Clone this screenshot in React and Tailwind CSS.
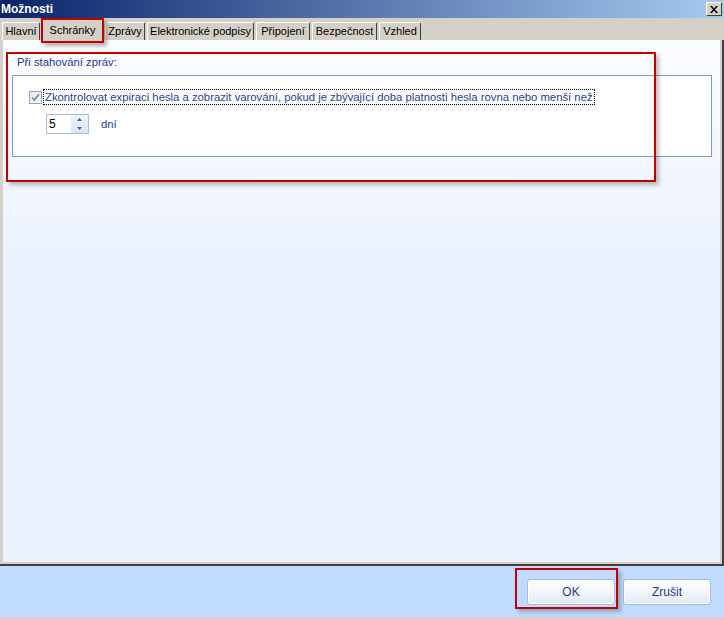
import React from 'react';

const tabs = [
    { label: 'Hlavní', w: 'w-[38px]' },
    { label: 'Schránky', w: 'w-[61px]', active: true },
    { label: 'Zprávy', w: 'w-[40px]' },
    { label: 'Elektronické podpisy', w: 'w-[107px]' },
    { label: 'Připojení', w: 'w-[54px]' },
    { label: 'Bezpečnost', w: 'w-[65px]' },
    { label: 'Vzhled', w: 'w-[42px]' },
];

const Tab = ({ label, w, active }) => (
    <div
        className={`${w} flex items-center justify-center border-t border-l border-white border-r border-r-[#404040] rounded-t-[2px] bg-[#d4d0c8] text-black whitespace-nowrap ${
            active ? 'h-[22px] -mb-[1px] relative z-10' : 'h-[18px]'
        }`}
    >
        {label}
    </div>
);

const DialogButton = ({ children }) => (
    <button className="w-[88px] h-[26px] rounded-[3px] border border-[#a9bcd6] bg-[linear-gradient(to_bottom,#ffffff_0%,#f3f6fb_50%,#dfe8f5_100%)] shadow-[inset_0_0_0_1px_#ffffff] text-[#1e3b8f] text-[12px]">
        {children}
    </button>
);

const App = () => {
    return (
        <div className="relative w-[724px] h-[619px] overflow-hidden flex flex-col bg-[#d4d0c8] font-['Liberation_Sans','DejaVu_Sans',sans-serif] text-[11px]">
            {/* title bar */}
            <div className="h-[18px] flex items-center justify-between bg-[linear-gradient(to_right,#0a246a,#a6caf0)] pl-[1px] pr-[2px]">
                <span className="text-white font-bold text-[12px] leading-none">Možnosti</span>
                <div className="w-[16px] h-[14px] bg-[#d4d0c8] border border-t-white border-l-white border-r-[#404040] border-b-[#404040] flex items-center justify-center">
                    <svg width="8" height="7" viewBox="0 0 8 7">
                        <path d="M0 0h2l2 2.5L6 0h2L5 3.5 8 7H6L4 4.5 2 7H0l3-3.5z" fill="#000" />
                    </svg>
                </div>
            </div>

            {/* tab strip */}
            <div className="h-[22px] flex items-end gap-[2px] pl-[2px]">
                {tabs.map((t) => (
                    <Tab key={t.label} {...t} />
                ))}
            </div>

            {/* page */}
            <div className="h-[526px] flex pl-[3px] pr-[2px] pb-[2px] border-r-2 border-b-2 border-[#404040]">
                <div className="flex-1 border-t border-white bg-[linear-gradient(to_bottom,#fbfcff_0%,#eaf1fd_46%,#eaf1fd_100%)]">
                    <div className="mt-[15px] ml-[14px] leading-[13px] text-[11.3px] text-[#1f3c96]">Při stahování zpráv:</div>
                    <div className="mt-[6px] ml-[9px] mr-[8px] h-[82px] bg-white border border-[#7b9ed6] pt-[13px] text-[11.3px]">
                        <div className="flex items-center h-[16px] pl-[16px]">
                            <div className="w-[13px] h-[13px] border border-[#8fa4c2] bg-[linear-gradient(to_bottom_right,#e4e8f0,#f8f9fb)] flex items-center justify-center">
                                <svg width="9" height="9" viewBox="0 0 9 9">
                                    <path d="M1 4.5l2.3 2.5L8 1.2" stroke="#7b8daf" strokeWidth="1.8" fill="none" />
                                </svg>
                            </div>
                            <span className="ml-[1px] h-[16px] flex items-center px-[1px] border border-dotted border-black text-[#1e3f95] whitespace-nowrap">
                                Zkontrolovat expiraci hesla a zobrazit varování, pokud je zbývající doba platnosti hesla rovna nebo menší než
                            </span>
                        </div>
                        <div className="flex items-center mt-[9px] pl-[33px]">
                            <div className="w-[43px] h-[20px] border border-[#a7bcd6] bg-white flex">
                                <span className="flex-1 pl-[2px] text-black text-[12px] leading-[18px]">5</span>
                                <div className="w-[17px] flex flex-col bg-[linear-gradient(to_bottom,#eef3fa,#dae4f2)]">
                                    <div className="flex-1 flex items-center justify-center">
                                        <svg width="5" height="3" viewBox="0 0 5 3"><path d="M0 3L2.5 0 5 3z" fill="#4d6185" /></svg>
                                    </div>
                                    <div className="flex-1 flex items-center justify-center">
                                        <svg width="5" height="3" viewBox="0 0 5 3"><path d="M0 0h5L2.5 3z" fill="#4d6185" /></svg>
                                    </div>
                                </div>
                            </div>
                            <span className="ml-[12px] text-[#1e3f95]">dní</span>
                        </div>
                    </div>
                </div>
            </div>

            {/* bottom band */}
            <div className="flex-1 bg-[#c0dbff] border-b-2 border-[#d4d0c8] flex justify-end items-start gap-[8px] pt-[13px] pr-[13px]">
                <DialogButton>OK</DialogButton>
                <DialogButton>Zrušit</DialogButton>
            </div>

            {/* red highlight annotations */}
            <div className="absolute left-[41px] top-[18px] w-[63px] h-[25px] border-2 border-[#c40000] shadow-[3px_3px_4px_rgba(0,0,0,0.3)] z-20" />
            <div className="absolute left-[6px] top-[52px] w-[650px] h-[130px] border-2 border-[#c40000] shadow-[3px_3px_4px_rgba(0,0,0,0.25)] z-20" />
            <div className="absolute left-[515px] top-[568px] w-[103px] h-[41px] border-2 border-[#c40000] shadow-[3px_3px_4px_rgba(0,0,0,0.25)] z-20" />
        </div>
    );
};

export default App;
